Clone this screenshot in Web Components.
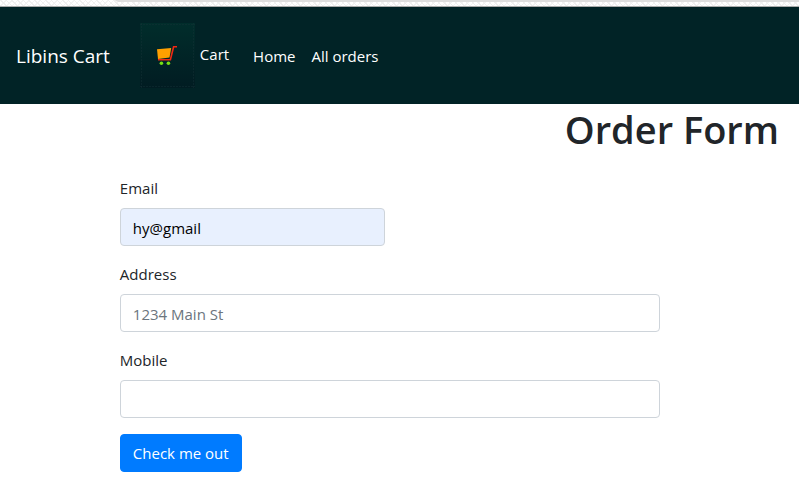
<!DOCTYPE html>
<html lang="en">
<head>
<meta charset="utf-8">
<title>Order Form</title>
<style>
body { margin: 0; background: #fff; color: #212529; font: 15px/24px "Open Sans", "Noto Sans", sans-serif; }
</style>
</head>
<body>
<order-page></order-page>
<script>
const define = (name, html, setup) => {
  const template = document.createElement('template');
  template.innerHTML = html;
  customElements.define(name, class extends HTMLElement {
    constructor() {
      super();
      this.attachShadow({ mode: 'open' }).append(template.content.cloneNode(true));
    }
    connectedCallback() { if (setup) setup(this, this.shadowRoot); }
  });
};

define('browser-edge', `
<style>
:host { display: block; box-sizing: border-box; height: 7px; border-bottom: 1px solid #a9abab;
  background: repeating-linear-gradient(45deg, #efefef 0 1px, transparent 1px 4px),
    repeating-linear-gradient(-45deg, #f3f3f3 0 1px, transparent 1px 4px), #fff; }
div { margin-left: 115px; height: 2px; background: #dedede; border-bottom-left-radius: 6px 2px; }
</style>
<div></div>`);

define('cart-icon', `
<style>
:host { display: block; }
svg { display: block; }
</style>
<svg width="55" height="65" viewBox="0 0 55 65" aria-hidden="true">
  <defs><linearGradient id="g" x1="0" y1="0" x2="0" y2="1">
    <stop offset="0" stop-color="#012d2b"/><stop offset="1" stop-color="#011c22"/>
  </linearGradient></defs>
  <rect width="55" height="65" fill="url(#g)"/>
  <path d="M0 1.5H55M0 63.5H55M1.5 0V65M53.5 0V65" stroke="#173238" stroke-opacity=".45" stroke-dasharray="2 1" fill="none"/>
  <path d="M17 26.2 31.2 25 29.5 34.5 18 36Z" fill="#ffa000"/>
  <path d="M37 23.8H33.6L30.4 36.8H18" fill="none" stroke="#f02814" stroke-width="1.6"/>
  <circle cx="21.4" cy="40.2" r="1.8" fill="#78df12"/>
  <circle cx="28.4" cy="40.2" r="1.8" fill="#78df12"/>
</svg>`);

define('nav-link', `
<style>
:host { display: block; }
a { display: flex; align-items: center; gap: 5px; color: #fff; text-decoration: none; white-space: nowrap; }
</style>
<a href="#"><slot name="icon"></slot><slot></slot></a>`);

define('site-nav', `
<style>
:host { display: block; background: #012326; }
nav { display: flex; align-items: center; padding: 16px; }
.brand { font-size: 19px; margin-right: 30px; }
.cart { margin-right: 24px; }
.cart span { padding-bottom: 4px; }
.home { margin-right: 16px; }
</style>
<nav>
  <nav-link class="brand">Libins Cart</nav-link>
  <nav-link class="cart"><cart-icon slot="icon"></cart-icon><span>Cart</span></nav-link>
  <nav-link class="home">Home</nav-link>
  <nav-link>All orders</nav-link>
</nav>`);

define('form-field', `
<style>
:host { display: block; }
label { display: block; margin-bottom: 8px; }
input { display: block; box-sizing: border-box; width: 100%; height: 38px; margin: 0; padding: 7px 12px 5px;
  border: 1px solid #ced4da; border-radius: 4px; background: #fff; color: #000; font: inherit; }
input::placeholder { color: #6c757d; opacity: 1; }
:host([filled]) input { background: #e8f0fe; }
</style>
<label for="field"></label>
<input id="field">`, (host, root) => {
  root.querySelector('label').textContent = host.getAttribute('label');
  const input = root.querySelector('input');
  input.type = host.getAttribute('type') || 'text';
  input.value = host.getAttribute('value') || '';
  input.placeholder = host.getAttribute('placeholder') || '';
});

define('submit-button', `
<style>
:host { display: block; }
button { height: 38px; padding: 6px 12px; border: 1px solid #007bff; border-radius: 4px;
  background: #007bff; color: #fff; font: inherit; cursor: pointer; }
</style>
<button type="submit"><slot></slot></button>`);

define('order-form', `
<style>
:host { display: block; }
form { display: grid; grid-template-columns: 1fr 1fr; gap: 16px 10px; max-width: 540px; margin: 0 20px 0 15%; }
.wide { grid-column: 1 / -1; }
</style>
<form>
  <form-field label="Email" type="email" value="hy@gmail" filled></form-field>
  <form-field class="wide" label="Address" placeholder="1234 Main St"></form-field>
  <form-field class="wide" label="Mobile" type="tel"></form-field>
  <submit-button class="wide">Check me out</submit-button>
</form>`);

define('order-page', `
<style>
:host { display: block; }
h1 { margin: 0 20px 22px; font-size: 38px; line-height: 50px; font-weight: 600; text-align: right; }
</style>
<browser-edge></browser-edge>
<site-nav></site-nav>
<main>
  <h1>Order Form</h1>
  <order-form></order-form>
</main>`);
</script>
</body>
</html>
